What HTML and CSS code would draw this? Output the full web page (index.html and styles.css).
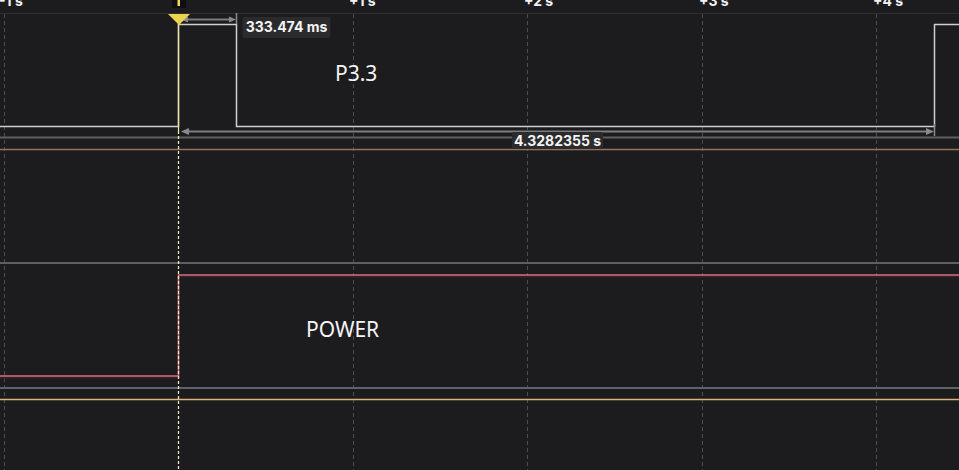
FILE: index.html
```html
<!DOCTYPE html>
<html lang="en">
<head>
    <meta charset="UTF-8">
    <meta name="viewport" content="width=device-width, initial-scale=1.0">
    <title>Logic capture</title>
    <link rel="stylesheet" href="styles.css">
</head>
<body>

    <div class="scope">
        <svg class="plot" width="959" height="470" viewBox="0 0 959 470">
            <!-- time ruler -->
            <g class="ruler">
                <text x="-1" y="6">-1 s</text>
                <text x="349" y="6">+1 s</text>
                <text x="524" y="6">+2 s</text>
                <text x="699" y="6">+3 s</text>
                <text x="873" y="6">+4 s</text>
            </g>
            <line class="ruler-edge" x1="0" y1="13.5" x2="959" y2="13.5"/>

            <!-- grid, one line per second -->
            <g class="grid">
                <line x1="4.5" y1="14" x2="4.5" y2="470"/>
                <line x1="353.5" y1="14" x2="353.5" y2="470"/>
                <line x1="527.5" y1="14" x2="527.5" y2="470"/>
                <line x1="702.5" y1="14" x2="702.5" y2="470"/>
                <line x1="876.5" y1="14" x2="876.5" y2="470"/>
            </g>

            <!-- channel P3.3 -->
            <path class="wave wave-p33" d="M0 126.5 H178.5 V24.5 H236.5 V126.5 H934.5 V24.5 H959"/>
            <line class="sep" x1="0" y1="137.5" x2="959" y2="137.5"/>
            <line class="trace-tan" x1="0" y1="149.5" x2="959" y2="149.5"/>
            <text class="channel-name" x="335" y="81">P3.3</text>

            <!-- channel POWER -->
            <line class="sep" x1="0" y1="263" x2="959" y2="263"/>
            <path class="wave-glow" d="M0 377.5 H178.5 V276.5 H959"/>
            <path class="wave wave-power" d="M0 376 H178.5 V275 H959"/>
            <line class="sep sep-blue" x1="0" y1="388" x2="959" y2="388"/>
            <line class="trace-orange" x1="0" y1="399.5" x2="959" y2="399.5"/>
            <text class="channel-name" x="306" y="337">POWER</text>

            <!-- measurements -->
            <g class="measure">
                <line class="tick" x1="236.5" y1="13" x2="236.5" y2="24"/>
                <line class="span" x1="184" y1="19.5" x2="231" y2="19.5"/>
                <polygon points="181,19.5 188,16.5 188,22.5"/>
                <polygon points="236,19.5 229,16.5 229,22.5"/>
                <rect x="242.5" y="17" width="88" height="21" rx="2"/>
                <text x="286.5" y="32">333.474 ms</text>

                <line class="tick" x1="934.5" y1="124" x2="934.5" y2="136"/>
                <line class="span" x1="184" y1="131.5" x2="929" y2="131.5"/>
                <polygon points="181,131.5 189,128 189,135"/>
                <polygon points="934,131.5 926,128 926,135"/>
                <rect x="512" y="132" width="91" height="17" rx="2"/>
                <text x="557.5" y="146">4.3282355 s</text>
            </g>

            <!-- trigger cursor at 0 s -->
            <rect class="cursor-slot" x="172" y="0" width="14" height="8"/>
            <rect class="cursor-mark" x="177.5" y="0" width="2.5" height="6"/>
            <line class="cursor" x1="178.5" y1="14" x2="178.5" y2="131"/>
            <line class="cursor cursor-dash" x1="178.5" y1="131" x2="178.5" y2="470"/>
            <polygon class="cursor-head" points="168,14 190,14 179,25"/>
        </svg>
    </div>

</body>
</html>
```

FILE: styles.css
```css
body {
    margin: 0;
    background: #1c1c1f;
    overflow: hidden;
}

.scope {
    width: 959px;
    height: 470px;
    background: #1c1c1f;
}

.plot {
    display: block;
}

.ruler text {
    font-family: Inter, "Liberation Sans", sans-serif;
    font-weight: 700;
    font-size: 14px;
    fill: #f2f2f2;
}

.ruler-edge {
    stroke: #303034;
    stroke-width: 1;
}

.grid line {
    stroke: #4c4c51;
    stroke-width: 1;
    stroke-dasharray: 4 3;
}

.wave {
    fill: none;
    stroke-width: 1.5;
}

.wave-p33 {
    stroke: #cfcfd0;
}

.wave-power {
    stroke: #cf7384;
}

.wave-glow {
    fill: none;
    stroke: #3b1f26;
    stroke-width: 2;
}

.sep {
    stroke: #5f5f63;
    stroke-width: 2;
}

.sep-blue {
    stroke: #5a6367;
}

.trace-tan {
    stroke: #95735f;
    stroke-width: 1.5;
}

.trace-orange {
    stroke: #dbb17c;
    stroke-width: 1.5;
}

.channel-name {
    font-family: "Noto Sans", "Open Sans", sans-serif;
    font-size: 21px;
    fill: #f4f4f4;
}

.measure .tick {
    stroke: #8a8a8e;
    stroke-width: 1.5;
}

.measure .span {
    stroke: #7c7c80;
    stroke-width: 2;
}

.measure polygon {
    fill: #8a8a8e;
}

.measure rect {
    fill: #2b2b2e;
}

.measure text {
    font-family: Inter, "Liberation Sans", sans-serif;
    font-weight: 700;
    font-size: 14px;
    fill: #f4f4f4;
    text-anchor: middle;
}

.cursor-slot {
    fill: #0f0f11;
}

.cursor-mark {
    fill: #f2dc55;
}

.cursor {
    stroke: #eee3a0;
    stroke-width: 1.25;
}

.cursor-dash {
    stroke: #f2ebc0;
    stroke-dasharray: 3 2;
}

.cursor-head {
    fill: #e9d34f;
}
```
